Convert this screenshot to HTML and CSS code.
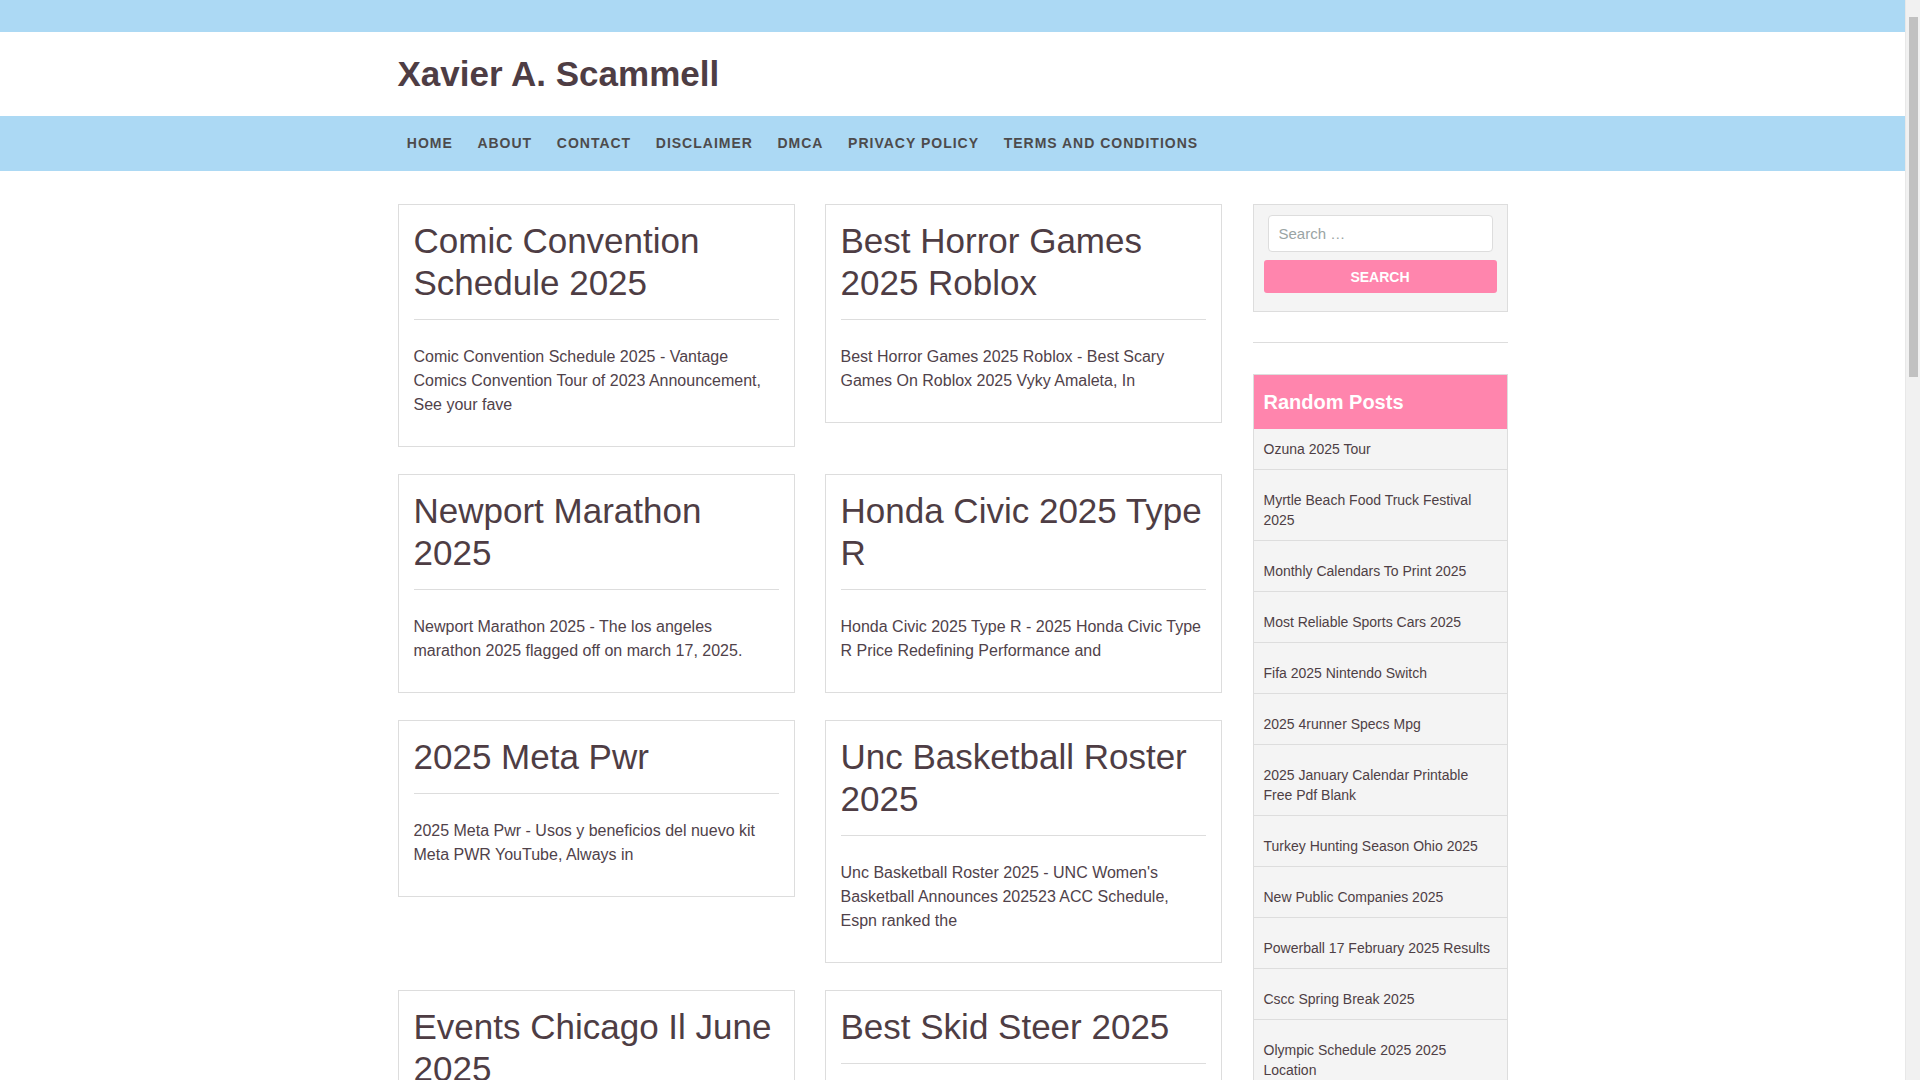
FILE: index.html
```html
<!DOCTYPE html>
<html lang="en">
<head>
<meta charset="utf-8">
<title>Xavier A. Scammell</title>
<link rel="stylesheet" href="styles.css">
</head>
<body>
<div class="page">
<div class="topbar"></div>
<header class="site-header">
  <div class="container header-inner">
    <h1 class="site-title">Xavier A. Scammell</h1>
  </div>
</header>
<nav class="main-nav">
  <div class="container">
    <ul class="menu">
      <li><a href="#">Home</a></li>
      <li><a href="#">About</a></li>
      <li><a href="#">Contact</a></li>
      <li><a href="#">Disclaimer</a></li>
      <li><a href="#">DMCA</a></li>
      <li><a href="#">Privacy Policy</a></li>
      <li><a href="#">Terms and Conditions</a></li>
    </ul>
  </div>
</nav>
<div class="container content">
  <main class="posts">
    <article class="card">
      <h2>Comic Convention Schedule 2025</h2>
      <hr>
      <p>Comic Convention Schedule 2025 - Vantage Comics Convention Tour of 2023 Announcement, See your fave</p>
    </article>
    <article class="card">
      <h2>Best Horror Games 2025 Roblox</h2>
      <hr>
      <p>Best Horror Games 2025 Roblox - Best Scary Games On Roblox 2025 Vyky Amaleta, In</p>
    </article>
    <article class="card">
      <h2>Newport Marathon 2025</h2>
      <hr>
      <p>Newport Marathon 2025 - The los angeles marathon 2025 flagged off on march 17, 2025.</p>
    </article>
    <article class="card">
      <h2>Honda Civic 2025 Type R</h2>
      <hr>
      <p>Honda Civic 2025 Type R - 2025 Honda Civic Type R Price Redefining Performance and</p>
    </article>
    <article class="card">
      <h2>2025 Meta Pwr</h2>
      <hr>
      <p>2025 Meta Pwr - Usos y beneficios del nuevo kit Meta PWR YouTube, Always in</p>
    </article>
    <article class="card">
      <h2>Unc Basketball Roster 2025</h2>
      <hr>
      <p>Unc Basketball Roster 2025 - UNC Women's Basketball Announces 202523 ACC Schedule, Espn ranked the</p>
    </article>
    <article class="card">
      <h2>Events Chicago Il June 2025</h2>
      <hr>
      <p>Events Chicago Il June 2025 - Chicago Events June 2025 Calendar, Things to do in Chicago this</p>
    </article>
    <article class="card">
      <h2>Best Skid Steer 2025</h2>
      <hr>
      <p>Best Skid Steer 2025 - The Best Skid Steer Loaders of 2025, Compare top brands and</p>
    </article>
  </main>
  <aside class="sidebar">
    <section class="search-widget">
      <form class="search-form" action="#">
        <input class="search-field" type="search" placeholder="Search …">
        <button class="search-submit" type="button">SEARCH</button>
      </form>
    </section>
    <div class="widget-sep"></div>
    <section class="posts-widget">
      <h3 class="widget-title">Random Posts</h3>
      <ul class="post-list">
        <li><a href="#">Ozuna 2025 Tour</a></li>
        <li><a href="#">Myrtle Beach Food Truck Festival 2025</a></li>
        <li><a href="#">Monthly Calendars To Print 2025</a></li>
        <li><a href="#">Most Reliable Sports Cars 2025</a></li>
        <li><a href="#">Fifa 2025 Nintendo Switch</a></li>
        <li><a href="#">2025 4runner Specs Mpg</a></li>
        <li><a href="#">2025 January Calendar Printable Free Pdf Blank</a></li>
        <li><a href="#">Turkey Hunting Season Ohio 2025</a></li>
        <li><a href="#">New Public Companies 2025</a></li>
        <li><a href="#">Powerball 17 February 2025 Results</a></li>
        <li><a href="#">Cscc Spring Break 2025</a></li>
        <li><a href="#">Olympic Schedule 2025 2025 Location</a></li>
      </ul>
    </section>
  </aside>
</div>
</div>
<div class="fake-scrollbar" aria-hidden="true"><div class="fake-thumb"></div></div>
</body>
</html>
```

FILE: styles.css
```css
html, body {
  margin: 0;
  padding: 0;
}
body {
  font-family: "Liberation Sans", Arial, sans-serif;
  color: #4e3f45;
  background: #ffffff;
}
.page {
  margin-right: 15px;
}
.fake-scrollbar {
  position: fixed;
  top: 0;
  right: 0;
  width: 15px;
  height: 100%;
  background: #f1f1f1;
  border-left: 1px solid #e8e8e8;
  box-sizing: border-box;
}
.fake-thumb {
  margin: 17px 2px 0 3px;
  height: 360px;
  background: #c1c1c1;
}
.container {
  width: 1110px;
  margin: 0 auto;
}
.topbar {
  height: 32px;
  background: #acd9f4;
}
.site-header {
  height: 84px;
}
.header-inner {
  height: 84px;
  display: flex;
  align-items: center;
}
.site-title {
  margin: 0;
  font-size: 35px;
  line-height: 42px;
  font-weight: bold;
  color: #4e3d44;
}
.main-nav {
  height: 55px;
  background: #acd9f4;
}
.menu {
  display: flex;
  list-style: none;
  margin: 0 0 0 -3px;
  padding: 0;
}
.menu a {
  display: block;
  padding: 0 12.3px;
  line-height: 55px;
  font-size: 14px;
  font-weight: bold;
  letter-spacing: 1px;
  text-transform: uppercase;
  color: #4d4b4c;
  text-decoration: none;
}
.content {
  display: flex;
  align-items: flex-start;
  gap: 31px;
  margin-top: 33px;
  padding-bottom: 40px;
}
.posts {
  width: 824px;
  display: grid;
  grid-template-columns: 397px 397px;
  column-gap: 30px;
  row-gap: 27px;
  align-items: start;
}
.card {
  border: 1px solid #dddddd;
  padding: 15px 15px 20px;
  background: #ffffff;
}
.card h2 {
  margin: 0 0 15px;
  font-size: 35px;
  line-height: 42px;
  font-weight: normal;
  color: #4e3d44;
}
.card hr {
  border: 0;
  border-top: 1px solid #dddddd;
  height: 0;
  margin: 0 0 25px;
}
.card p {
  margin: 0 0 9px;
  font-size: 16px;
  line-height: 24px;
  color: #50424a;
}
.sidebar {
  width: 255px;
}
.search-widget {
  background: #f4f4f4;
  border: 1px solid #dddddd;
  padding: 10px 10px 18px;
}
.search-form {
  margin: 0;
}
.search-field {
  display: block;
  box-sizing: border-box;
  width: calc(100% - 8px);
  height: 37px;
  margin: 0 4px;
  padding: 0 10px;
  border: 1px solid #dddddd;
  border-radius: 4px;
  background: #ffffff;
  font-family: "Liberation Sans", Arial, sans-serif;
  font-size: 15px;
  color: #4e3f45;
  outline: none;
}
.search-field::placeholder {
  color: #9aa4a4;
}
.search-submit {
  display: block;
  width: 100%;
  height: 33px;
  margin-top: 8px;
  border: 0;
  border-radius: 3px;
  background: #ff85ad;
  color: #ffffff;
  font-family: "Liberation Sans", Arial, sans-serif;
  font-size: 14px;
  font-weight: bold;
}
.widget-sep {
  border-top: 1px solid #dddddd;
  margin: 30px 0 31px;
}
.posts-widget {
  border: 1px solid #dddddd;
  background: #f4f4f4;
}
.widget-title {
  margin: 0;
  padding: 15px 10px;
  background: #ff85ad;
  color: #ffffff;
  font-size: 20px;
  line-height: 24px;
  font-weight: bold;
}
.post-list {
  list-style: none;
  margin: 0;
  padding: 0;
}
.post-list li {
  padding: 10px;
  border-bottom: 1px solid #dddddd;
  font-size: 14px;
  line-height: 20px;
}
.post-list li + li {
  padding-top: 20px;
}
.post-list a {
  color: #4e3f45;
  text-decoration: none;
}
```
